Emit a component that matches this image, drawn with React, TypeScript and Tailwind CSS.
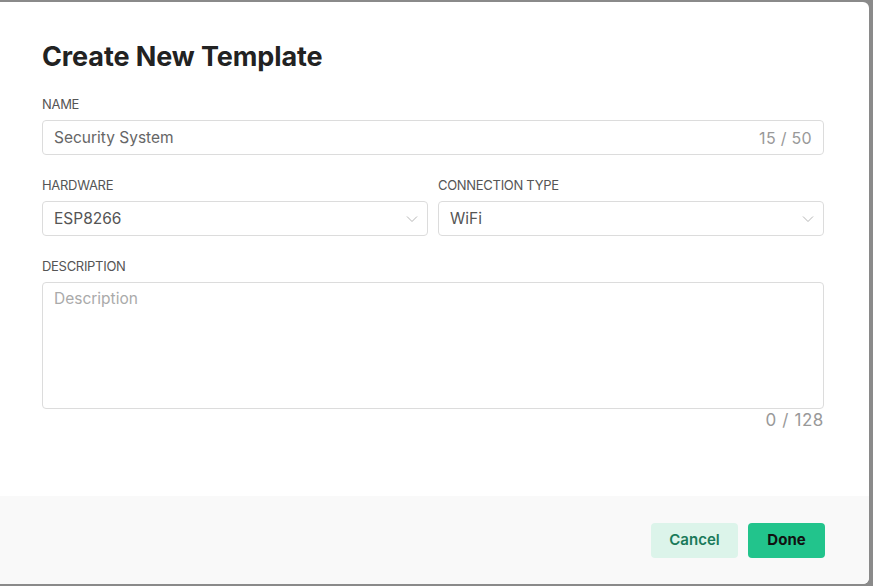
function Label({ children }: { children: string }) {
  return <div className="h-4 text-[13px] leading-4 uppercase text-[#555] tracking-[-0.3px]">{children}</div>;
}

function Chevron() {
  return (
    <svg width="12" height="8" viewBox="0 0 12 8" fill="none" className="text-[#b5b5b5]">
      <path d="M1 1.5 L6 6.5 L11 1.5" stroke="currentColor" strokeWidth="1" />
    </svg>
  );
}

function Select({ value }: { value: string }) {
  return (
    <div className="mt-[8px] flex h-[35px] items-center justify-between rounded-[4px] border border-[#dcdcdc] bg-white pl-[11px] pr-[9px]">
      <span className="text-[15.5px] text-[#555]">{value}</span>
      <Chevron />
    </div>
  );
}

export default function App() {
  return (
    <div className="h-[586px] w-[873px] bg-[#8a8a8a] pt-[2px] pr-[4px] pb-[2px]" style={{ fontFamily: "Inter, 'Noto Sans', sans-serif" }}>
      <div className="flex h-full flex-col overflow-hidden rounded-r-[6px] bg-white">
        <div className="flex-1 pl-[42px] pr-[45px] pt-[39px]">
          <h1 className="h-8 text-[27px] font-bold leading-8 tracking-[-0.1px] text-[#222]">Create New Template</h1>

          <div className="mt-[23px]">
            <Label>NAME</Label>
            <div className="mt-[8px] flex h-[35px] items-center justify-between rounded-[4px] border border-[#dcdcdc] pl-[11px] pr-[11px]">
              <span className="text-[15.5px] text-[#666]">Security System</span>
              <span className="text-[16px] tracking-[0.3px] text-[#999]">15 / 50</span>
            </div>
          </div>

          <div className="mt-[22px] grid grid-cols-2 gap-[10px]">
            <div>
              <Label>HARDWARE</Label>
              <Select value="ESP8266" />
            </div>
            <div>
              <Label>CONNECTION TYPE</Label>
              <Select value="WiFi" />
            </div>
          </div>

          <div className="mt-[22px]">
            <Label>DESCRIPTION</Label>
            <div className="mt-[8px] h-[127px] rounded-[4px] border border-[#dcdcdc] px-[11px] pt-[3px]">
              <span className="text-[15.5px] text-[#aaa]">Description</span>
            </div>
            <div className="mt-[1px] text-right text-[17px] leading-5 tracking-[0.6px] text-[#999]">0 / 128</div>
          </div>
        </div>

        <div className="flex h-[88px] items-start justify-end gap-[10px] bg-[#f9f9f9] px-[44px] pt-[27px]">
          <button className="h-[35px] w-[87px] rounded-[4px] bg-[#dcf4ea] text-[15px] font-semibold text-[#1a7a5a]">Cancel</button>
          <button className="h-[35px] w-[77px] rounded-[4px] bg-[#22c48c] text-[15px] font-bold text-[#111]">Done</button>
        </div>
      </div>
    </div>
  );
}
